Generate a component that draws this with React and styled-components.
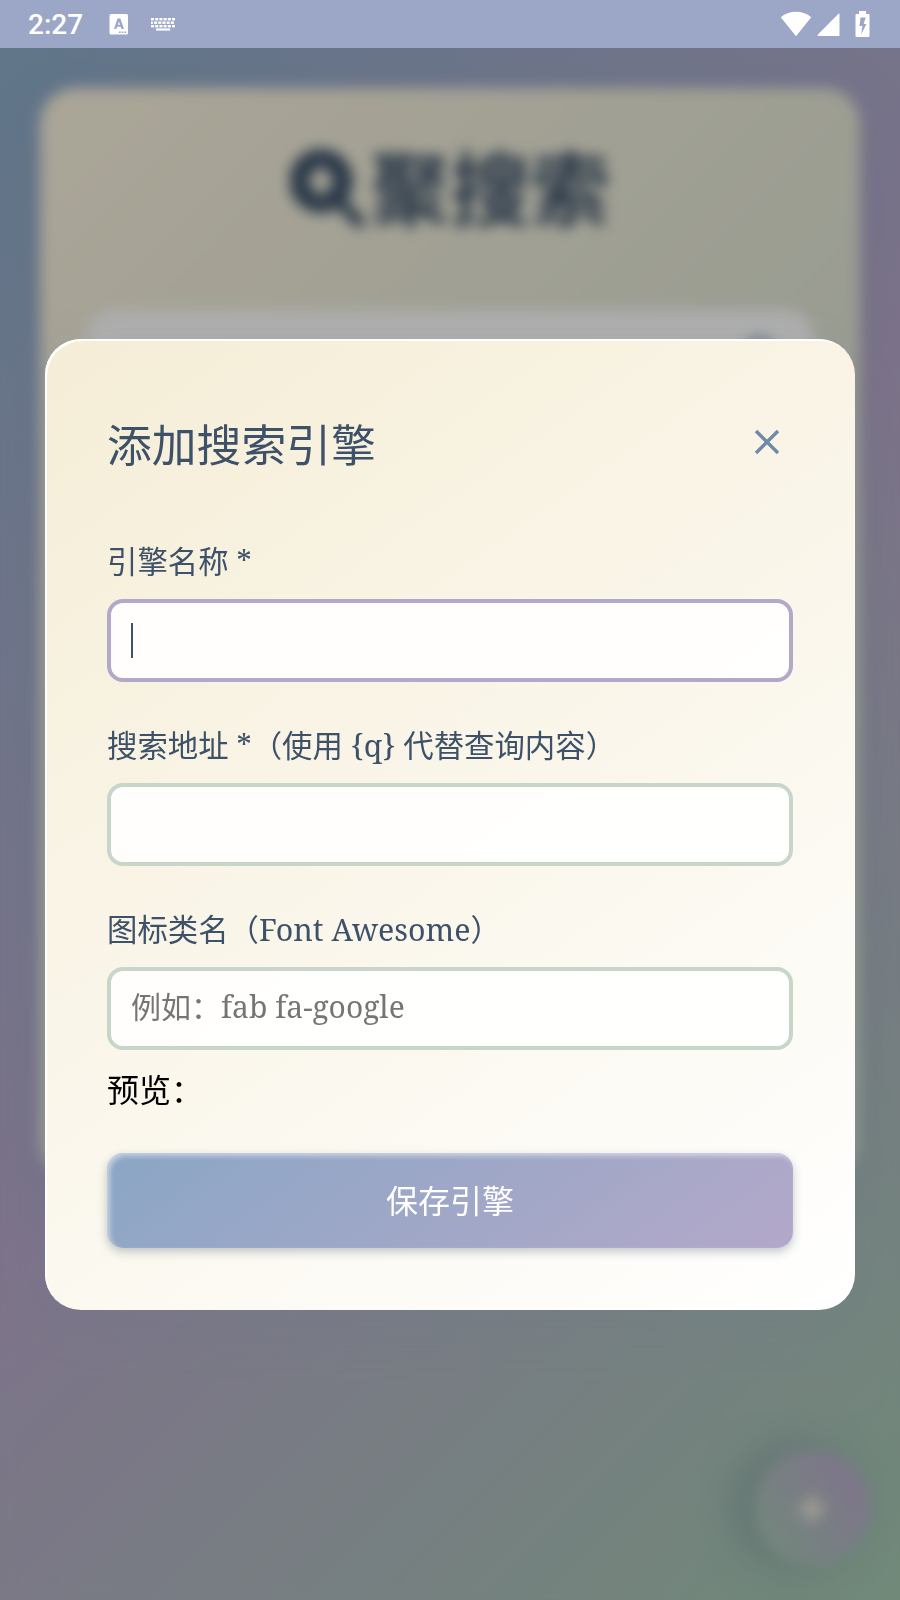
import React, { useState } from 'react'
import { FaSearch, FaPlus } from "react-icons/fa";
import styled, { createGlobalStyle } from 'styled-components';

const GlobalStyle = createGlobalStyle`
    * {
        box-sizing: border-box;
    }
    body {
        margin: 0;
        font-family: "Noto Serif", "DejaVu Serif Condensed", "Noto Sans CJK SC", serif;
    }
`;

const Screen = styled.div`
    display: flex;
    flex-direction: column;
    width: 900px;
    height: 1600px;
    overflow: hidden;
`;

const StatusBar = styled.header`
    display: flex;
    align-items: center;
    justify-content: space-between;
    height: 48px;
    padding: 0 30px 0 28px;
    background: #9ca7c7;
    color: #fff;
`;

const StatusGroup = styled.div`
    display: flex;
    align-items: center;
`;

const Clock = styled.span`
    width: 81px;
    font: 500 28px/48px Roboto, sans-serif;
    padding-top: 2px;
`;

const StatusIcon = styled.svg`
    display: block;
    margin-left: ${props => props.$gap || 0}px;
    fill: #fff;
`;

const Page = styled.main`
    position: relative;
    flex: 1;
    padding: 40px;
    background: linear-gradient(135deg, #8ba9c4 0%, #b4a5c6 50%, #a1c5ae 100%);
`;

const Card = styled.section`
    height: 1090px;
    padding: 42px 46px;
    border-radius: 36px;
    background: linear-gradient(135deg, #f5edd9, #c8d6ca);
    box-shadow: 0 16px 60px rgba(93, 120, 150, 0.15);
`;

const Brand = styled.h1`
    display: flex;
    align-items: center;
    justify-content: center;
    gap: 4px;
    height: 116px;
    margin: 0 0 64px;
    color: #3d5168;
    font-size: 80px;
    font-weight: 700;
    line-height: 1;
`;

const BrandIcon = styled.svg`
    display: block;
    fill: currentColor;
    stroke: currentColor;
`;

const SearchBox = styled.div`
    display: flex;
    justify-content: flex-end;
    height: 110px;
    padding: 28px 32px;
    border-radius: 28px;
    background: #f9f9f8;
    color: #6f8aa9;
    font-size: 38px;
`;

const AddButton = styled.button`
    position: absolute;
    right: 30px;
    bottom: 34px;
    display: flex;
    align-items: center;
    justify-content: center;
    width: 116px;
    height: 116px;
    padding: 2px 0 0;
    border: none;
    border-radius: 50%;
    background: linear-gradient(55deg, #a5c2b2 10%, #b5a8c7 85%);
    box-shadow: -16px -2px 44px rgba(85, 115, 130, 0.38);
    color: #f5edd9;
    font-size: 32px;
`;

const Overlay = styled.div`
    position: absolute;
    inset: 0;
    display: flex;
    justify-content: center;
    align-items: flex-start;
    padding-top: 291px;
    background: rgba(0, 0, 0, 0.3);
    backdrop-filter: blur(7px);
`;

const Modal = styled.div`
    width: 810px;
    height: 971px;
    padding: 62px;
    border-radius: 36px;
    background: linear-gradient(145deg, #f5edd6, #ffffff);
    box-shadow: 0 16px 64px rgba(100, 120, 140, 0.18), inset 2px 2px 0 #fff;
`;

const ModalHeader = styled.div`
    display: flex;
    justify-content: space-between;
    height: 88px;
    margin-bottom: 51px;
`;

const ModalTitle = styled.h2`
    margin: 0;
    color: #3d5168;
    font-size: 44.8px;
    font-weight: 400;
    line-height: 88px;
`;

const CloseButton = styled.button`
    width: 52px;
    height: 82px;
    padding: 0 13px;
    border: none;
    background: none;
    cursor: pointer;
    svg {
        display: block;
        stroke: #6f8aa9;
        stroke-width: 3.4;
    }
`;

const Field = styled.div`
    margin-bottom: ${props => props.$last ? 17 : 42}px;
`;

const Label = styled.label`
    display: block;
    height: 44px;
    margin-bottom: 15px;
    color: #3d5168;
    font-size: 30.4px;
    line-height: 44px;
    white-space: nowrap;
`;

const InputBox = styled.div`
    display: flex;
    align-items: center;
    height: 83px;
    padding: 0 20px;
    border: 4px solid ${props => props.$focus ? '#b2a8c9' : '#c8d6ca'};
    border-radius: 16px;
    background: rgba(255, 255, 255, 0.9);
`;

const Caret = styled.span`
    width: 2px;
    height: 35px;
    background: #3d5168;
`;

const Input = styled.input`
    flex: 1;
    min-width: 0;
    height: 44px;
    margin-bottom: 4px;
    padding: 0;
    border: none;
    outline: none;
    background: none;
    color: #3d5168;
    font-family: inherit;
    font-size: 30px;
    caret-color: transparent;
    &::placeholder {
        color: #757575;
    }
`;

const Preview = styled.div`
    height: 46px;
    margin-bottom: 40px;
    color: #000;
    font-size: 32px;
    line-height: 46px;
`;

const SaveButton = styled.button`
    width: 100%;
    height: 95px;
    padding: 0 0 4px;
    border: none;
    border-radius: 16px;
    background: linear-gradient(145deg, #8ba6c5, #b3a8c9);
    box-shadow: 0 4px 10px rgba(61, 81, 104, 0.3), inset 3px 3px 5px rgba(255, 255, 255, 0.5);
    color: #fff;
    font-family: inherit;
    font-size: 32px;
`;

const fields = [
    { key: 'name', label: '引擎名称 *' },
    { key: 'url', label: '搜索地址 *（使用 {q} 代替查询内容）' },
    { key: 'icon', label: '图标类名（Font Awesome）', placeholder: '例如：fab fa-google' },
];

const keyRows = [0, 1, 2];

const App = () => {

    const [values, setValues] = useState({ name: '', url: '', icon: '' });
    const [focused, setFocused] = useState('name');

    return (
        <Screen>
            <GlobalStyle />
            <StatusBar>
                <StatusGroup>
                    <Clock>2:27</Clock>
                    <StatusIcon width="20" height="21" viewBox="0 0 20 21">
                        <path fillRule="evenodd" d="M2 0h15.500a1.500 1.500 0 0 1 1.500 1.500v17.500a1.500 1.500 0 0 1-1.500 1.500H2A1.500 1.500 0 0 1 .5 19V1.500A1.500 1.500 0 0 1 2 0zM8.500 4.500L5 15h2.300l.8-2.300h3.600l.8 2.300H15L11.300 4.500zM9.900 7.500l1.100 3.300H8.800zM10 17.500v1.500h1.700v-1.500zM12.800 17.500v1.500h1.700v-1.500zM15.600 17.500v1.500h1.700v-1.500z" />
                    </StatusIcon>
                    <StatusIcon $gap={22} width="24" height="13" viewBox="0 0 24 13">
                        {keyRows.map(row =>
                            [0, 1, 2, 3, 4, 5].map(col => (
                                <rect key={row + '-' + col} x={col * 4.2 + (row === 1 ? -1.2 : 0)} y={row * 3.5} width="3.1" height="2.4" />
                            ))
                        )}
                        <rect x="5" y="10.4" width="14" height="2.2" />
                    </StatusIcon>
                </StatusGroup>
                <StatusGroup>
                    <StatusIcon width="32" height="26" viewBox="0 0 32 26">
                        <path d="M.8 6.200C5 2.700 10 .8 16 .8s11 1.900 15.200 5.400L16.600 24.500c-.4.500-.8.500-1.200 0z" />
                    </StatusIcon>
                    <StatusIcon $gap={5} width="23" height="26" viewBox="0 0 23 26">
                        <path d="M22.500 2.500V25H1.500c-1 0-1.300-.8-.6-1.500L21.500 2.800z" />
                    </StatusIcon>
                    <StatusIcon $gap={15} width="15" height="27" viewBox="0 0 15 27">
                        <path fillRule="evenodd" d="M4 0h7v3h2.500a1 1 0 0 1 1 1v21a1 1 0 0 1-1 1h-12a1 1 0 0 1-1-1V4a1 1 0 0 1 1-1H4zM5.500 6.500L4.500 15h3L6 23.500 11.500 13H8.700l2-6.500z" />
                    </StatusIcon>
                </StatusGroup>
            </StatusBar>
            <Page>
                <Card>
                    <Brand>
                        <BrandIcon width="76" height="80" viewBox="0 0 76 80">
                            <path stroke="none" fillRule="evenodd" d="M31 1a32 32 0 1 0 .1 0zM31 17l14 16-14 16-14-16z" />
                            <path strokeWidth="12" strokeLinecap="round" d="M52 56l17 18" />
                        </BrandIcon>
                        聚搜索
                    </Brand>
                    <SearchBox><FaSearch /></SearchBox>
                </Card>
                <AddButton><FaPlus /></AddButton>
                <Overlay>
                    <Modal>
                        <ModalHeader>
                            <ModalTitle>添加搜索引擎</ModalTitle>
                            <CloseButton>
                                <svg width="26" height="26" viewBox="0 0 26 26">
                                    <path d="M2 2l22 22M24 2L2 24" />
                                </svg>
                            </CloseButton>
                        </ModalHeader>
                        {fields.map((field, i) => (
                            <Field key={field.key} $last={i === fields.length - 1}>
                                <Label htmlFor={field.key}>{field.label}</Label>
                                <InputBox $focus={focused === field.key}>
                                    {focused === field.key && values[field.key] === '' && <Caret />}
                                    <Input
                                        id={field.key}
                                        value={values[field.key]}
                                        placeholder={field.placeholder}
                                        onFocus={() => setFocused(field.key)}
                                        onChange={e => setValues({ ...values, [field.key]: e.target.value })} />
                                </InputBox>
                            </Field>
                        ))}
                        <Preview>预览：</Preview>
                        <SaveButton>保存引擎</SaveButton>
                    </Modal>
                </Overlay>
            </Page>
        </Screen>
    )
}

export default App
